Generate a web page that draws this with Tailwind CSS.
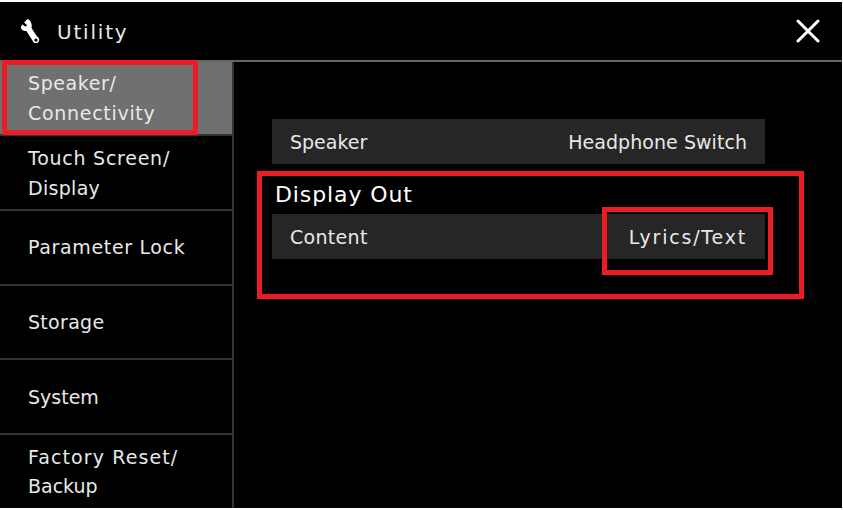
<!DOCTYPE html>
<html lang="en">

<head>
  <meta charset="UTF-8">
  <meta name="viewport" content="width=device-width, initial-scale=1.0">
  <script src="https://cdn.jsdelivr.net/npm/@tailwindcss/browser@4"></script>
  <title>Utility</title>
</head>

<body class="bg-white">
  <div class="relative w-[842px] h-[510px] pt-[2px] pb-[2px] overflow-hidden font-['DejaVu_Sans',sans-serif] text-[#e8e8e8] text-[19px]">
    <div class="flex flex-col h-full bg-black">
      <!-- title bar -->
      <header class="flex items-center justify-between h-[60px] shrink-0 pl-[20px] pr-[22px] border-b-2 border-[#666]">
        <div class="flex items-center gap-[17px]">
          <svg class="w-[20px] h-[26px]" viewBox="0 0 20 26">
            <path d="M7.5 1 L4 4.5 L7 7 L5.8 8.8 L2.5 6.5 L0.8 9 C1 12 3.5 13.5 6.5 13 L13 23.5 C14 25.5 17.5 25.5 18.8 23.5 C19.8 21.5 19 19.5 17 18.6 L11.5 10 C12.5 6 10.5 2 7.5 1 Z" fill="#fff" />
            <circle cx="16" cy="22" r="1.6" fill="#000" />
          </svg>
          <span class="pt-[2px] text-[20px] tracking-[1.8px]">Utility</span>
        </div>
        <svg class="w-[24px] h-[24px]" viewBox="0 0 24 24">
          <path d="M2 2 L22 22 M22 2 L2 22" stroke="#fff" stroke-width="3" stroke-linecap="round" />
        </svg>
      </header>

      <div class="flex flex-1 min-h-0">
        <!-- left menu -->
        <nav class="flex flex-col w-[234px] shrink-0 border-r-2 border-[#333] leading-[30px]">
          <div class="flex items-center h-[74px] pl-[28px] bg-[#707070] border-b-2 border-[#333]">
            <p><span class="tracking-[0.6px]">Speaker/</span><br><span class="tracking-[0.7px]">Connectivity</span></p>
          </div>
          <div class="flex items-center h-[75px] pl-[28px] border-b-2 border-[#333]">
            <p><span class="tracking-[0.75px]">Touch Screen/</span><br><span class="tracking-[0.3px]">Display</span></p>
          </div>
          <div class="flex items-center h-[75px] pl-[28px] pb-[2px] border-b-2 border-[#333] tracking-[0.65px]">Parameter Lock</div>
          <div class="flex items-center h-[74px] pl-[28px] border-b-2 border-[#333] tracking-[0.3px]">Storage</div>
          <div class="flex items-center h-[75px] pl-[28px] border-b-2 border-[#333]">System</div>
          <div class="flex items-center flex-1 pl-[28px] leading-[29px]">
            <p><span class="tracking-[1.1px]">Factory Reset/</span><br>Backup</p>
          </div>
        </nav>

        <!-- settings -->
        <main class="flex-1 pl-[38px] pt-[57px]">
          <div class="flex items-center justify-between w-[493px] h-[45px] pt-[2px] px-[18px] bg-[#262626]">
            <span>Speaker</span>
            <span class="tracking-[0.05px]">Headphone Switch</span>
          </div>
          <h2 class="mt-[13px] pl-[3px] h-[37px] leading-[36px] text-[22px] text-white tracking-[0.9px]">Display Out</h2>
          <div class="flex items-center justify-between w-[493px] h-[45px] pt-[2px] px-[18px] bg-[#262626]">
            <span class="tracking-[0.3px]">Content</span>
            <span class="tracking-[1.8px]">Lyrics/Text</span>
          </div>
        </main>
      </div>
    </div>

    <!-- red annotation boxes -->
    <div class="absolute left-[2px] top-[60px] w-[196px] h-[75px] border-[5px] border-[#ed1c24]"></div>
    <div class="absolute left-[257px] top-[171px] w-[547px] h-[128px] border-[5px] border-[#ed1c24]"></div>
    <div class="absolute left-[602px] top-[207px] w-[171px] h-[68px] border-[5px] border-[#ed1c24]"></div>
  </div>
</body>

</html>
